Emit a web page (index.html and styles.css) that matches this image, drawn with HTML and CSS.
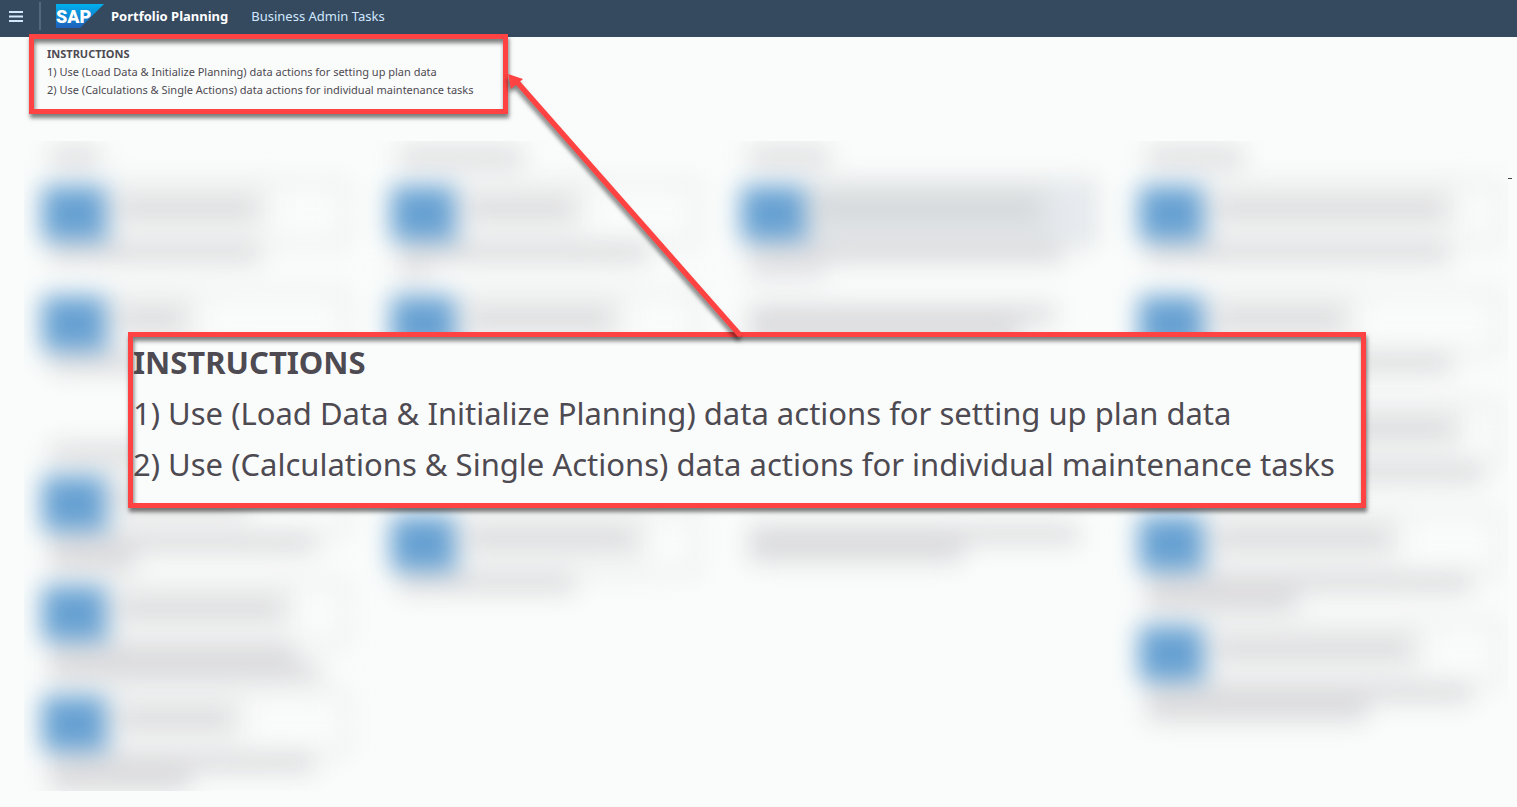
FILE: index.html
```
<!DOCTYPE html>
<html lang="en">
<head>
<meta charset="utf-8">
<title>Portfolio Planning</title>
<link rel="stylesheet" href="styles.css">
</head>
<body>
<header class="topbar">
  <button class="menu" aria-label="Menu"><svg width="14" height="12" viewBox="0 0 14 12"><path d="M0 2h14M0 6.500h14M0 11h14" stroke="#d1e8ff" stroke-width="2"/></svg></button>
  <span class="divider"></span>
  <svg class="logo" width="48" height="24" viewBox="0 0 48 24" role="img" aria-label="SAP">
    <defs><linearGradient id="g" x1="0" y1="0" x2="0" y2="1"><stop offset="0" stop-color="#00b0ee"/><stop offset="1" stop-color="#1e5fbb"/></linearGradient></defs>
    <path d="M0 0H48L24 24H0Z" fill="url(#g)"/>
    <text class="logo-text" x="0" y="19">SAP</text>
  </svg>
  <h1 class="title">Portfolio Planning</h1>
  <a class="crumb" href="#">Business Admin Tasks</a>
</header>

<main class="page">
  <section class="instructions">
    <h2>INSTRUCTIONS</h2>
    <p>1) Use (Load Data &amp; Initialize Planning) data actions for setting up plan data</p>
    <p>2) Use (Calculations &amp; Single Actions) data actions for individual maintenance tasks</p>
  </section>

  <div class="board-wrap">
    <div class="board" aria-hidden="true">
      <div class="columns">
        <div class="column">
          <div class="heading"><i style="width:50px"></i></div>
          <div class="tile"><div class="row"><b></b><span class="card"><i style="width:136px"></i></span></div><i style="width:210px"></i></div>
          <div class="tile"><div class="row"><b></b><span class="card"><i style="width:64px"></i></span></div><i style="width:190px"></i></div>
          <div class="heading second"><i style="width:100px"></i></div>
          <div class="tile"><div class="row"><b></b><span class="card"><i style="width:120px"></i></span></div><i style="width:266px"></i><i style="width:84px"></i></div>
          <div class="tile"><div class="row"><b></b><span class="card"><i style="width:162px"></i></span></div><i style="width:246px"></i><i style="width:270px"></i></div>
          <div class="tile"><div class="row"><b></b><span class="card"><i style="width:112px"></i></span></div><i style="width:264px"></i><i style="width:140px"></i></div>
        </div>
        <div class="column">
          <div class="heading"><i style="width:124px"></i></div>
          <div class="tile"><div class="row"><b></b><span class="card"><i style="width:104px"></i></span></div><i style="width:248px"></i><i class="light" style="width:32px"></i></div>
          <div class="tile"><div class="row"><b></b><span class="card"><i style="width:142px"></i></span></div></div>
          <div class="tile"></div>
          <div class="tile"><div class="row"><b></b><span class="card"><i style="width:166px"></i></span></div><i style="width:176px"></i></div>
        </div>
        <div class="column">
          <div class="heading"><i style="width:80px"></i></div>
          <div class="tile"><div class="row"><b></b><span class="card active"><i style="width:218px"></i></span></div><i style="width:314px"></i><i class="light" style="width:76px"></i></div>
          <div class="tile note"><i style="width:306px"></i><i style="width:270px"></i></div>
          <div class="tile"></div>
          <div class="tile note"><i style="width:330px"></i><i style="width:214px"></i></div>
        </div>
        <div class="column">
          <div class="heading"><i style="width:96px"></i></div>
          <div class="tile"><div class="row"><b></b><span class="card"><i style="width:228px"></i></span></div><i style="width:302px"></i></div>
          <div class="tile"><div class="row"><b></b><span class="card"><i style="width:126px"></i></span></div><i style="width:304px"></i></div>
          <div class="tile"><div class="row"><b></b><span class="card"><i style="width:236px"></i></span></div><i style="width:336px"></i></div>
          <div class="tile"><div class="row"><b></b><span class="card"><i style="width:172px"></i></span></div><i style="width:324px"></i><i style="width:150px"></i></div>
          <div class="tile"><div class="row"><b></b><span class="card"><i style="width:194px"></i></span></div><i style="width:324px"></i><i style="width:220px"></i></div>
        </div>
      </div>
    </div>
    <span class="tick"></span>
  </div>
</main>

<aside class="callout">
  <h2>INSTRUCTIONS</h2>
  <p>1) Use (Load Data &amp; Initialize Planning) data actions for setting up plan data</p>
  <p>2) Use (Calculations &amp; Single Actions) data actions for individual maintenance tasks</p>
</aside>
<svg class="arrow" width="250" height="280" viewBox="0 0 250 280" aria-hidden="true">
  <path d="M17 22L239 274" stroke="#ff4242" stroke-width="5.500" stroke-linecap="round"/>
  <path d="M8 14L23 19L11 29Z" fill="#ff4242"/>
</svg>
</body>
</html>
```
FILE: styles.css
```
* { box-sizing: border-box; }
body {
  margin: 0;
  height: 100vh;
  display: flex;
  flex-direction: column;
  position: relative;
  overflow: hidden;
  background: #fafcfb;
  color: #4e4a52;
  font-family: "Noto Sans", "Open Sans", sans-serif;
}
h1, h2, p { margin: 0; font-size: inherit; }

.topbar {
  height: 37px;
  flex: none;
  display: flex;
  align-items: center;
  padding: 0 9px 6px;
  background: #354a5f;
  font-size: 13px;
}
.menu { display: flex; padding: 0; border: 0; background: none; }
.divider { width: 2px; height: 28px; margin: 0 15px 0 16px; background: #55677a; }
.logo { margin-right: 7px; }
.logo-text { font: 900 18px Roboto, sans-serif; fill: #fff; }
.title { color: #fff; font-weight: 700; }
.crumb { margin-left: 23px; color: #d1e8ff; text-decoration: none; }

.page { flex: 1; min-height: 0; display: flex; flex-direction: column; }
.instructions {
  position: relative;
  align-self: flex-start;
  margin: -3px 0 27px 29px;
  padding: 6px 30px 10px 13px;
  border: 5px solid #ff4242;
  box-shadow: 1px 4px 4px rgba(0, 0, 0, .5), inset 1px 4px 4px rgba(0, 0, 0, .5);
  font-size: 11px;
  line-height: 18px;
  white-space: nowrap;
}

.board-wrap { position: relative; flex: 1; min-height: 0; display: flex; margin: 0 9px 16px 24px; }
.board { flex: 1; overflow: hidden; }
.columns {
  display: grid;
  grid-template-columns: 349fr 350fr 398fr 369fr;
  padding-left: 18px;
  filter: blur(12px);
}
.column { display: flex; flex-direction: column; }
.column i { display: block; height: 18px; background: #dadadc; }
.column .light { background: #e6e6e8; }
.heading { height: 42px; padding: 7px 0 0 8px; }
.second { height: 70px; padding-top: 41px; }
.tile { height: 110px; display: flex; flex-direction: column; gap: 1px; padding-left: 8px; }
.tile.note { padding-top: 12px; }
.row { display: flex; align-items: center; height: 60px; margin: 0 44px 0 -8px; }
.column:last-child .row { margin-right: 8px; }
.row b { width: 68px; height: 55px; border-radius: 4px; background: #67a1d2; }
.card { flex: 1; height: 64px; padding: 17px 0 0 10px; border: 2px solid #c4c6c6; border-left: 0; }
.card i { box-shadow: 0 0 0 14px #eff0f0; }
.active { background: #e6eaee; }
.active i { box-shadow: 0 0 0 14px #e0e3e5; background: #d3d6d8; }
.tick { position: absolute; left: 100%; top: 37px; width: 4px; height: 1px; background: #444; }

.callout {
  position: absolute;
  left: 128px;
  right: 151px;
  top: 332px;
  padding-bottom: 13px;
  border: 5px solid #ff4242;
  background: #fafcfb;
  box-shadow: 1px 4px 4px rgba(0, 0, 0, .5), inset 1px 4px 4px rgba(0, 0, 0, .5);
  font-size: 31px;
  line-height: 51px;
  white-space: nowrap;
}
.arrow { position: absolute; left: 500px; top: 60px; filter: drop-shadow(-1px 4px 2px rgba(0, 0, 0, .5)); }
```
